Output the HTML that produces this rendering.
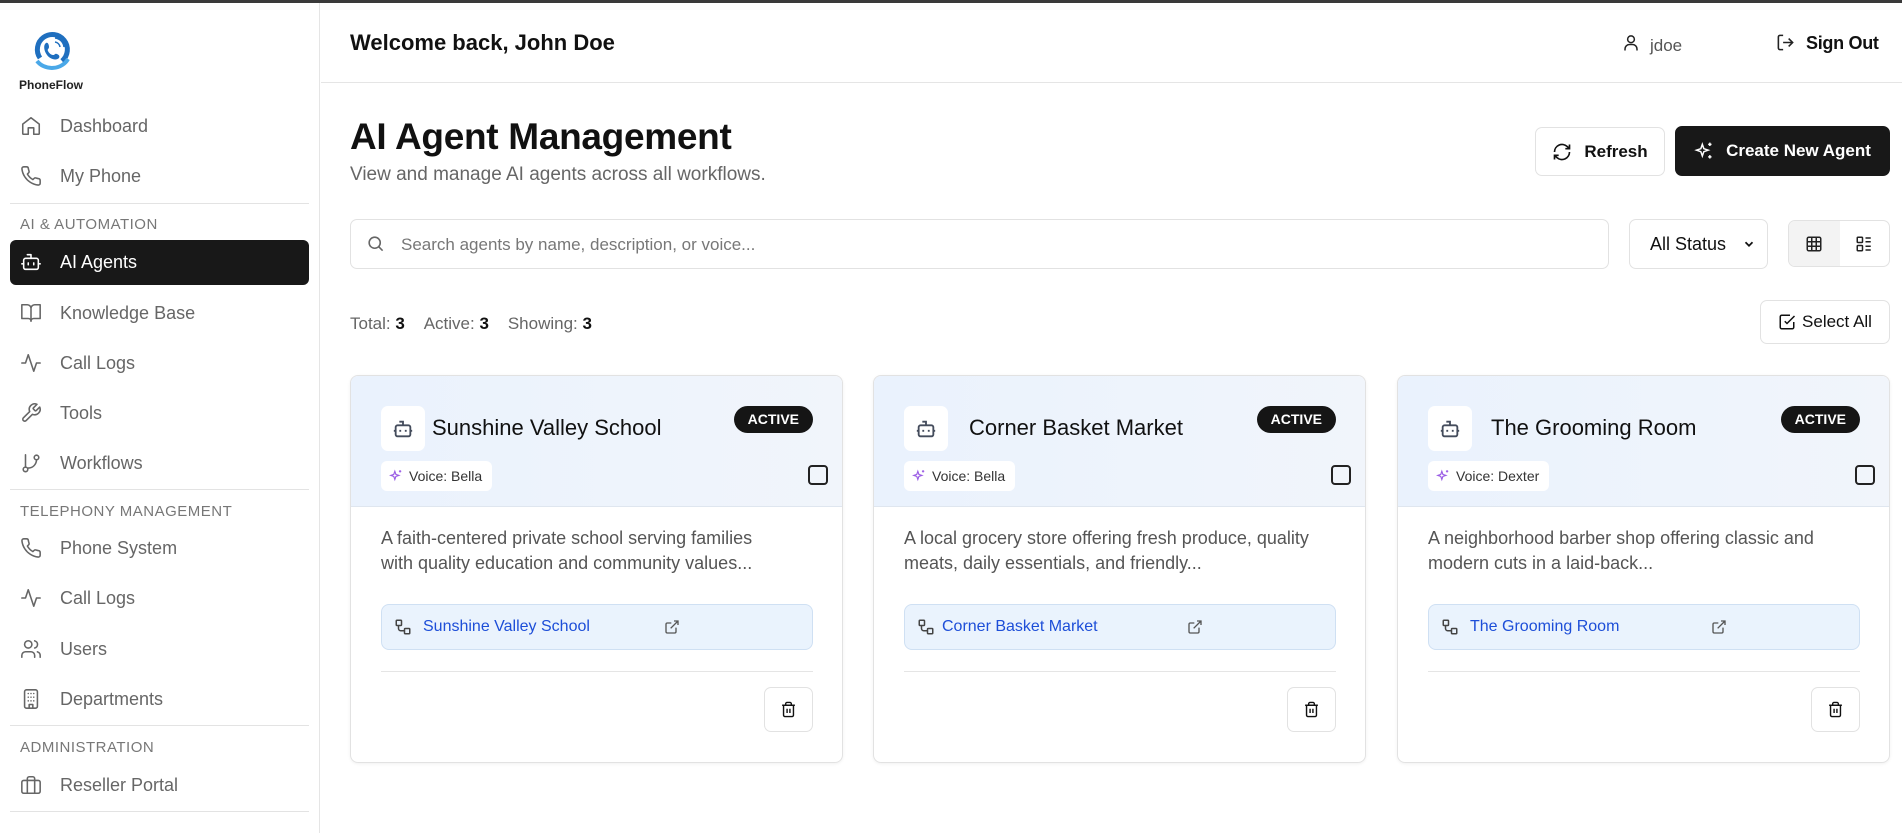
<!DOCTYPE html>
<html><head><meta charset="utf-8"><style>
*{box-sizing:border-box;margin:0;padding:0}
body{width:1902px;height:833px;overflow:hidden;background:#fff;font-family:"Liberation Sans",sans-serif;color:#111;position:relative}
.a{position:absolute}
.topbar{left:0;top:0;width:1902px;height:3px;background:#3a3a3a}
.side{left:0;top:3px;width:320px;height:830px;border-right:1px solid #e5e5e5}
.nav{position:absolute;left:20px;height:44px;display:flex;align-items:center;font-size:18px;color:#666}
.nav svg{width:22px;height:22px;margin-right:18px;stroke:#666;fill:none;stroke-width:1.7;stroke-linecap:round;stroke-linejoin:round}
.sec{position:absolute;left:20px;font-size:15px;color:#777;letter-spacing:.5px}
.hr{position:absolute;left:10px;width:299px;height:1px;background:#e3e3e3}
.btn{position:absolute;border:1px solid #e2e2e2;border-radius:7px;background:#fff;display:flex;align-items:center;justify-content:center;font-size:17px;font-weight:bold}
.card{position:absolute;top:375px;width:493px;height:388px;border:1px solid #e2e2e2;border-radius:8px;overflow:hidden;box-shadow:0 1px 3px rgba(0,0,0,.06)}
.ch{position:absolute;left:0;top:0;right:0;height:131px;background:linear-gradient(90deg,#eaf2fd,#f1f5fb);border-bottom:1px solid #dfe6ef}
.ib{position:absolute;left:30px;top:30px;width:44px;height:45px;background:#fff;border-radius:7px;display:flex;align-items:center;justify-content:center}
.tt{position:absolute;left:81px;top:39px;font-size:22px;color:#111}
.bd{position:absolute;right:29px;top:30px;height:27px;padding:0 14px;background:#151515;color:#fff;border-radius:14px;font-size:14px;font-weight:bold;line-height:27px}
.vc{position:absolute;left:30px;top:85px;height:30px;padding:0 10px 0 8px;background:#fff;border-radius:6px;font-size:14px;color:#333;display:flex;align-items:center;gap:6px}
.cb{position:absolute;right:14px;top:89px;width:20px;height:20px;border:2px solid #222;border-radius:4px}
.ds{position:absolute;left:30px;top:150px;width:405px;font-size:18px;line-height:25px;color:#555}
.lk{position:absolute;left:30px;top:228px;width:432px;height:46px;background:#eaf3fd;border:1px solid #cfe0f3;border-radius:8px}
.lk .t{position:absolute;left:41px;top:13px;font-size:16px;color:#1d4ed8}
.lk .e{position:absolute;left:282px;top:14px}
.lk .g{position:absolute;left:12px;top:13px}
.dv{position:absolute;left:30px;top:295px;width:432px;height:1px;background:#e5e5e5}
.tr{position:absolute;left:413px;top:311px;width:49px;height:45px;border:1px solid #e2e2e2;border-radius:7px;display:flex;align-items:center;justify-content:center}
</style></head><body>
<div class="a topbar"></div>
<div class="a side">
  <svg class="a" style="left:30px;top:27px" width="44" height="44" viewBox="0 0 44 44"><path d="M10 28 A15 15 0 1 1 32 31" fill="none" stroke="#1f6fbf" stroke-width="5"/><path d="M7 31 A18 16 0 0 0 38 29" fill="none" stroke="#4aa8e8" stroke-width="4"/><path d="M16 13c2-1 3 2 3 4s-2 2-1 4 3 4 5 4 2-2 4-1 3 2 2 4c-3 3-9 1-12-3s-4-10-1-12z" fill="#1f6fbf"/><path d="M25 12a6 6 0 0 1 5 5M25 8a10 10 0 0 1 9 9" fill="none" stroke="#1f6fbf" stroke-width="1.5"/></svg>
  <div class="a" style="left:19px;top:75px;font-size:12px;font-weight:bold;color:#222">PhoneFlow</div>
  <div class="nav" style="top:101px"><svg viewBox="0 0 24 24"><path d="M3 10l9-7 9 7v10a1 1 0 0 1-1 1h-5v-7H9v7H4a1 1 0 0 1-1-1z"/></svg>Dashboard</div>
  <div class="nav" style="top:151px"><svg viewBox="0 0 24 24"><path d="M22 16.9v3a2 2 0 0 1-2.2 2 19.8 19.8 0 0 1-8.6-3.1 19.5 19.5 0 0 1-6-6A19.8 19.8 0 0 1 2.1 4.2 2 2 0 0 1 4.1 2h3a2 2 0 0 1 2 1.7c.1 1 .4 1.9.7 2.8a2 2 0 0 1-.5 2.1L8.1 9.900a16 16 0 0 0 6 6l1.3-1.3a2 2 0 0 1 2.1-.4c.9.3 1.8.6 2.8.7a2 2 0 0 1 1.7 2z"/></svg>My Phone</div>
  <div class="hr" style="top:200px"></div>
  <div class="sec" style="top:213px">AI &amp; AUTOMATION</div>
  <div class="a" style="left:10px;top:237px;width:299px;height:45px;background:#181818;border-radius:6px"></div>
  <div class="nav" style="top:237px;color:#fff"><svg viewBox="0 0 24 24" style="stroke:#fff"><rect x="4" y="8" width="16" height="12" rx="2"/><path d="M12 8V4H8M2 14h2M20 14h2M9 13v2M15 13v2"/></svg>AI Agents</div>
  <div class="nav" style="top:288px"><svg viewBox="0 0 24 24"><path d="M2 3h6a4 4 0 0 1 4 4v14a3 3 0 0 0-3-3H2zM22 3h-6a4 4 0 0 0-4 4v14a3 3 0 0 1 3-3h7z"/></svg>Knowledge Base</div>
  <div class="nav" style="top:338px"><svg viewBox="0 0 24 24"><path d="M22 12h-4l-3 9L9 3l-3 9H2"/></svg>Call Logs</div>
  <div class="nav" style="top:388px"><svg viewBox="0 0 24 24"><path d="M14.7 6.3a1 1 0 0 0 0 1.4l1.6 1.6a1 1 0 0 0 1.4 0l3.8-3.8a6 6 0 0 1-7.9 7.9l-6.9 6.9a2.1 2.1 0 0 1-3-3l6.9-6.9a6 6 0 0 1 7.9-7.9z"/></svg>Tools</div>
  <div class="nav" style="top:438px"><svg viewBox="0 0 24 24"><circle cx="6" cy="19" r="2.5"/><circle cx="18" cy="6" r="2.5"/><path d="M6 3v13.5M18 8.5a9 9 0 0 1-9 9"/></svg>Workflows</div>
  <div class="hr" style="top:486px"></div>
  <div class="sec" style="top:500px">TELEPHONY MANAGEMENT</div>
  <div class="nav" style="top:523px"><svg viewBox="0 0 24 24"><path d="M22 16.9v3a2 2 0 0 1-2.2 2 19.8 19.8 0 0 1-8.6-3.1 19.5 19.5 0 0 1-6-6A19.8 19.8 0 0 1 2.1 4.2 2 2 0 0 1 4.1 2h3a2 2 0 0 1 2 1.7c.1 1 .4 1.9.7 2.8a2 2 0 0 1-.5 2.1L8.1 9.9a16 16 0 0 0 6 6l1.3-1.3a2 2 0 0 1 2.1-.4c.9.3 1.8.6 2.8.7a2 2 0 0 1 1.7 2z"/></svg>Phone System</div>
  <div class="nav" style="top:573px"><svg viewBox="0 0 24 24"><path d="M22 12h-4l-3 9L9 3l-3 9H2"/></svg>Call Logs</div>
  <div class="nav" style="top:624px"><svg viewBox="0 0 24 24"><circle cx="9" cy="7" r="4"/><path d="M2 21v-2a4 4 0 0 1 4-4h6a4 4 0 0 1 4 4v2M16 3.1a4 4 0 0 1 0 7.8M22 21v-2a4 4 0 0 0-3-3.9"/></svg>Users</div>
  <div class="nav" style="top:674px"><svg viewBox="0 0 24 24"><rect x="5" y="2" width="14" height="20" rx="2"/><path d="M9 6h.01M12 6h.01M15 6h.01M9 10h.01M12 10h.01M15 10h.01M9 14h.01M12 14h.01M15 14h.01M10 22v-4h4v4"/></svg>Departments</div>
  <div class="hr" style="top:722px"></div>
  <div class="sec" style="top:736px">ADMINISTRATION</div>
  <div class="nav" style="top:760px"><svg viewBox="0 0 24 24"><rect x="2" y="7" width="20" height="14" rx="2"/><path d="M16 21V5a2 2 0 0 0-2-2h-4a2 2 0 0 0-2 2v16"/></svg>Reseller Portal</div>
  <div class="hr" style="top:808px"></div>
</div>
<div class="a" style="left:321px;top:82px;width:1581px;height:1px;background:#e5e5e5"></div>
<div class="a" style="left:350px;top:30px;font-size:22px;font-weight:bold">Welcome back, John Doe</div>
<svg class="a" style="left:1622px;top:34px" width="18" height="18" viewBox="0 0 24 24" fill="none" stroke="#222" stroke-width="2"><circle cx="12" cy="7" r="4.5"/><path d="M4 22v-2a6 6 0 0 1 6-6h4a6 6 0 0 1 6 6v2"/></svg>
<div class="a" style="left:1650px;top:36px;font-size:17px;color:#555">jdoe</div>
<svg class="a" style="left:1776px;top:33px" width="19" height="19" viewBox="0 0 24 24" fill="none" stroke="#222" stroke-width="2"><path d="M9 21H5a2 2 0 0 1-2-2V5a2 2 0 0 1 2-2h4M16 17l5-5-5-5M21 12H9"/></svg>
<div class="a" style="left:1806px;top:33px;font-size:18px;font-weight:bold;letter-spacing:-.3px">Sign Out</div>
<div class="a" style="left:350px;top:116px;font-size:37px;font-weight:bold;letter-spacing:-.3px">AI Agent Management</div>
<div class="a" style="left:350px;top:164px;font-size:19px;color:#666">View and manage AI agents across all workflows.</div>
<div class="btn" style="left:1535px;top:127px;width:130px;height:49px"><svg width="20" height="20" viewBox="0 0 24 24" fill="none" stroke="#111" stroke-width="2" style="margin-right:12px"><path d="M3 12a9 9 0 0 1 15-6.7L21 8M21 3v5h-5M21 12a9 9 0 0 1-15 6.7L3 16M8 16H3v5"/></svg>Refresh</div>
<div class="btn" style="left:1675px;top:126px;width:215px;height:50px;background:#181818;color:#fff;border-color:#181818"><svg width="20" height="20" viewBox="0 0 24 24" fill="none" stroke="#fff" stroke-width="1.8" style="margin-right:12px"><path d="M10 4l1.8 5.2L17 11l-5.2 1.8L10 18l-1.8-5.2L3 11l5.2-1.8zM19 2v4M17 4h4M19 17v4M17 19h4"/></svg>Create New Agent</div>
<div class="a" style="left:350px;top:219px;width:1259px;height:50px;border:1px solid #e2e2e2;border-radius:7px"></div>
<svg class="a" style="left:366px;top:234px" width="19" height="19" viewBox="0 0 24 24" fill="none" stroke="#666" stroke-width="2"><circle cx="11" cy="11" r="7"/><path d="M21 21l-5-5"/></svg>
<div class="a" style="left:401px;top:235px;font-size:17px;color:#777">Search agents by name, description, or voice...</div>
<div class="btn" style="left:1629px;top:219px;width:139px;height:50px;font-weight:normal;font-size:18px;justify-content:flex-start;padding-left:20px">All Status<svg width="14" height="14" viewBox="0 0 24 24" fill="none" stroke="#111" stroke-width="3" style="margin-left:16px"><path d="M6 9l6 6 6-6"/></svg></div>
<div class="a" style="left:1788px;top:220px;width:102px;height:47px;border:1px solid #e2e2e2;border-radius:7px;overflow:hidden"><div class="a" style="left:0;top:0;width:51px;height:47px;background:#f3f3f3"></div>
<svg class="a" style="left:16px;top:14px" width="18" height="18" viewBox="0 0 24 24" fill="none" stroke="#222" stroke-width="2"><rect x="3" y="3" width="18" height="18" rx="2"/><path d="M3 9h18M3 15h18M9 3v18M15 3v18"/></svg>
<svg class="a" style="left:66px;top:14px" width="18" height="18" viewBox="0 0 24 24" fill="none" stroke="#222" stroke-width="2"><rect x="3" y="3" width="7" height="7" rx="1"/><rect x="3" y="14" width="7" height="7" rx="1"/><path d="M14 4h7M14 9h7M14 15h7M14 20h7"/></svg></div>
<div class="a" style="left:350px;top:314px;font-size:17px;color:#666">Total: <b style="color:#111">3</b>&nbsp;&nbsp;&nbsp;&nbsp;Active: <b style="color:#111">3</b>&nbsp;&nbsp;&nbsp;&nbsp;Showing: <b style="color:#111">3</b></div>
<div class="btn" style="left:1760px;top:300px;width:130px;height:44px;font-weight:normal;font-size:17px;color:#111"><svg width="18" height="18" viewBox="0 0 24 24" fill="none" stroke="#111" stroke-width="2" style="margin-right:6px"><path d="M9 11l3 3L22 4M21 12v7a2 2 0 0 1-2 2H5a2 2 0 0 1-2-2V5a2 2 0 0 1 2-2h11"/></svg>Select All</div>

<div class="card" style="left:350px">
 <div class="ch"></div>
 <div class="ib"><svg width="22" height="22" viewBox="0 0 24 24" fill="none" stroke="#444c5c" stroke-width="2"><rect x="4" y="8" width="16" height="12" rx="2"/><path d="M12 8V4H8M2 14h2M20 14h2M9 13v2M15 13v2"/></svg></div>
 <div class="tt">Sunshine Valley School</div><div class="bd">ACTIVE</div>
 <div class="vc"><svg width="14" height="14" viewBox="0 0 24 24" fill="none" stroke="#9b5de5" stroke-width="2"><path d="M10 4l1.8 5.2L17 11l-5.2 1.8L10 18l-1.8-5.2L3 11l5.2-1.8zM19 2v4M17 4h4"/></svg>Voice: Bella</div>
 <div class="cb"></div>
 <div class="ds">A faith-centered private school serving families with quality education and community values...</div>
 <div class="lk"><svg class="g" width="18" height="18" viewBox="0 0 24 24" fill="none" stroke="#444" stroke-width="2"><rect x="3" y="3" width="7" height="7" rx="1"/><rect x="14" y="14" width="7" height="7" rx="1"/><path d="M6 10v4a3 3 0 0 0 3 3h5"/></svg><div class="t">Sunshine Valley School</div><svg class="e" width="16" height="16" viewBox="0 0 24 24" fill="none" stroke="#555" stroke-width="2"><path d="M15 3h6v6M10 14L21 3M18 13v6a2 2 0 0 1-2 2H5a2 2 0 0 1-2-2V8a2 2 0 0 1 2-2h6"/></svg></div>
 <div class="dv"></div>
 <div class="tr"><svg width="17" height="17" viewBox="0 0 24 24" fill="none" stroke="#111" stroke-width="2"><path d="M3 6h18M19 6v14a2 2 0 0 1-2 2H7a2 2 0 0 1-2-2V6M8 6V4a2 2 0 0 1 2-2h4a2 2 0 0 1 2 2v2M10 11v6M14 11v6"/></svg></div>
</div>
<div class="card" style="left:873px">
 <div class="ch"></div>
 <div class="ib"><svg width="22" height="22" viewBox="0 0 24 24" fill="none" stroke="#444c5c" stroke-width="2"><rect x="4" y="8" width="16" height="12" rx="2"/><path d="M12 8V4H8M2 14h2M20 14h2M9 13v2M15 13v2"/></svg></div>
 <div class="tt" style="left:95px">Corner Basket Market</div><div class="bd">ACTIVE</div>
 <div class="vc"><svg width="14" height="14" viewBox="0 0 24 24" fill="none" stroke="#9b5de5" stroke-width="2"><path d="M10 4l1.8 5.2L17 11l-5.2 1.8L10 18l-1.8-5.2L3 11l5.2-1.8zM19 2v4M17 4h4"/></svg>Voice: Bella</div>
 <div class="cb"></div>
 <div class="ds" style="width:440px">A local grocery store offering fresh produce, quality meats, daily essentials, and friendly...</div>
 <div class="lk"><svg class="g" width="18" height="18" viewBox="0 0 24 24" fill="none" stroke="#444" stroke-width="2"><rect x="3" y="3" width="7" height="7" rx="1"/><rect x="14" y="14" width="7" height="7" rx="1"/><path d="M6 10v4a3 3 0 0 0 3 3h5"/></svg><div class="t" style="left:37px">Corner Basket Market</div><svg class="e" width="16" height="16" viewBox="0 0 24 24" fill="none" stroke="#555" stroke-width="2"><path d="M15 3h6v6M10 14L21 3M18 13v6a2 2 0 0 1-2 2H5a2 2 0 0 1-2-2V8a2 2 0 0 1 2-2h6"/></svg></div>
 <div class="dv"></div>
 <div class="tr"><svg width="17" height="17" viewBox="0 0 24 24" fill="none" stroke="#111" stroke-width="2"><path d="M3 6h18M19 6v14a2 2 0 0 1-2 2H7a2 2 0 0 1-2-2V6M8 6V4a2 2 0 0 1 2-2h4a2 2 0 0 1 2 2v2M10 11v6M14 11v6"/></svg></div>
</div>
<div class="card" style="left:1397px">
 <div class="ch"></div>
 <div class="ib"><svg width="22" height="22" viewBox="0 0 24 24" fill="none" stroke="#444c5c" stroke-width="2"><rect x="4" y="8" width="16" height="12" rx="2"/><path d="M12 8V4H8M2 14h2M20 14h2M9 13v2M15 13v2"/></svg></div>
 <div class="tt" style="left:93px">The Grooming Room</div><div class="bd">ACTIVE</div>
 <div class="vc"><svg width="14" height="14" viewBox="0 0 24 24" fill="none" stroke="#9b5de5" stroke-width="2"><path d="M10 4l1.8 5.2L17 11l-5.2 1.8L10 18l-1.8-5.2L3 11l5.2-1.8zM19 2v4M17 4h4"/></svg>Voice: Dexter</div>
 <div class="cb"></div>
 <div class="ds" style="width:440px">A neighborhood barber shop offering classic and modern cuts in a laid-back...</div>
 <div class="lk"><svg class="g" width="18" height="18" viewBox="0 0 24 24" fill="none" stroke="#444" stroke-width="2"><rect x="3" y="3" width="7" height="7" rx="1"/><rect x="14" y="14" width="7" height="7" rx="1"/><path d="M6 10v4a3 3 0 0 0 3 3h5"/></svg><div class="t">The Grooming Room</div><svg class="e" width="16" height="16" viewBox="0 0 24 24" fill="none" stroke="#555" stroke-width="2"><path d="M15 3h6v6M10 14L21 3M18 13v6a2 2 0 0 1-2 2H5a2 2 0 0 1-2-2V8a2 2 0 0 1 2-2h6"/></svg></div>
 <div class="dv"></div>
 <div class="tr"><svg width="17" height="17" viewBox="0 0 24 24" fill="none" stroke="#111" stroke-width="2"><path d="M3 6h18M19 6v14a2 2 0 0 1-2 2H7a2 2 0 0 1-2-2V6M8 6V4a2 2 0 0 1 2-2h4a2 2 0 0 1 2 2v2M10 11v6M14 11v6"/></svg></div>
</div>
</body></html>
